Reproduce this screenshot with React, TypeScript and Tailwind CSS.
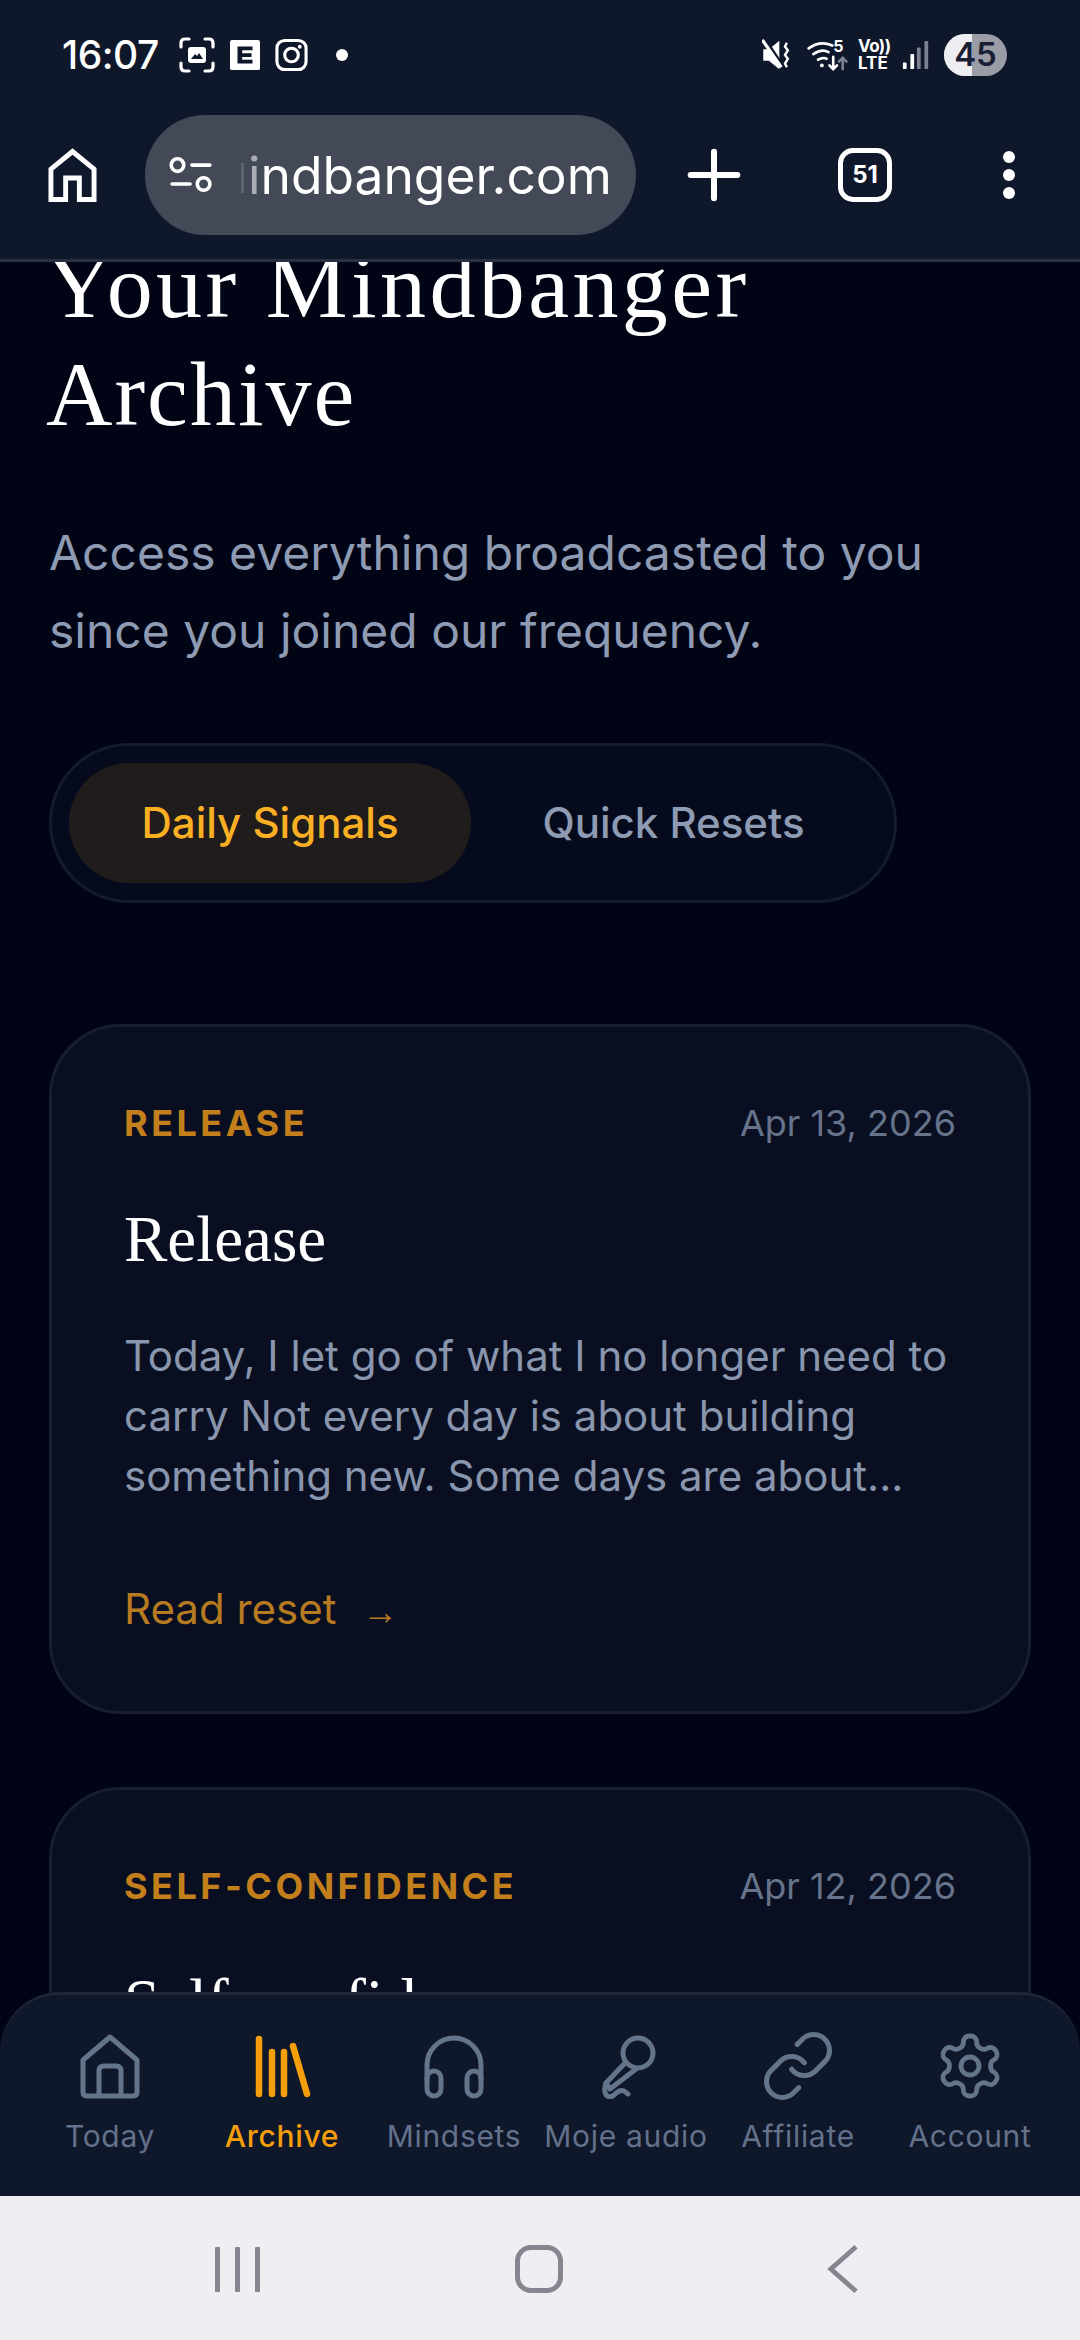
import { Plus } from "lucide-react";

const sans = "font-['Inter',sans-serif]";
const serif = "font-['Liberation_Serif',serif]";

function StatusBar() {
  return (
    <div className="flex h-[110px] items-center justify-between pl-[62px] pr-[73px] text-white">
      <div className="flex items-center">
        <span className={`${sans} w-[98px] text-[39px] font-medium tracking-[-0.5px] whitespace-nowrap`}>16:07</span>
        <svg className="ml-[19px]" width="36" height="36" viewBox="0 0 36 36" fill="none" stroke="white" strokeWidth="3.2" strokeLinecap="round">
          <path d="M2 10V6q0-4 4-4h4M26 2h4q4 0 4 4v4M34 26v4q0 4-4 4h-4M10 34H6q-4 0-4-4v-4" />
          <rect x="9" y="10" width="18" height="16" rx="3" fill="white" stroke="none" />
          <path d="M12 22l4-5 2 2 2-3 4 6z" fill="#0f172a" stroke="none" />
        </svg>
        <svg className="ml-[15px]" width="30" height="30" viewBox="0 0 32 32">
          <rect width="32" height="32" rx="2" fill="white" />
          <path d="M8 7h16v4H13v3h10v4H13v3h11v4H8z" fill="#0f172a" />
        </svg>
        <svg className="ml-[15px]" width="33" height="34" viewBox="0 0 34 34" fill="none" stroke="white" strokeWidth="3.2">
          <rect x="2" y="2" width="30" height="30" rx="8" />
          <circle cx="17" cy="17" r="7" />
          <circle cx="25.5" cy="8.5" r="2" fill="white" stroke="none" />
        </svg>
        <span className="ml-[28px] size-[12px] rounded-full bg-white" />
      </div>
      <div className="flex items-center">
        <svg width="29" height="34" viewBox="0 0 30 36" fill="white">
          <path d="M1 12h6L18 3v30L7 24H1z" />
          <path d="M3 1l21 32" stroke="#0f172a" strokeWidth="3" />
          <path d="M0 2l20 29" stroke="white" strokeWidth="3.4" />
          <path d="M26 5l-2 4 3 4-3 5 3 4-3 5 2 4" fill="none" stroke="white" strokeWidth="2.6" />
        </svg>
        <svg className="ml-[16px]" width="43" height="34" viewBox="0 0 44 36" fill="none" stroke="white" strokeWidth="2.8" strokeLinecap="round">
          <path d="M1 11q12-9 25-3M6 17q9-6 16-2M11 23q5-3 9-1" />
          <circle cx="15" cy="29" r="2" fill="white" stroke="none" />
          <path d="M27 20v13M23 29l4 4 4-4" />
          <path d="M37 33V21M33 25l4-4 4 4" stroke="#7c8190" />
          <text x="27" y="15" fill="white" stroke="none" fontSize="17" fontWeight="700" fontFamily="Inter, sans-serif">5</text>
        </svg>
        <div className={`${sans} ml-[8px] flex w-[30px] flex-col text-[17px] font-bold leading-[17px]`}>
          <span className="tracking-[-0.5px]">Vo))</span>
          <span>LTE</span>
        </div>
        <svg className="ml-[14px]" width="28" height="30" viewBox="0 0 28 32">
          <rect x="0" y="24" width="4" height="7" rx="1" fill="white" />
          <rect x="8" y="15" width="4" height="16" rx="1" fill="white" />
          <rect x="15" y="8" width="4" height="23" rx="1" fill="#7c8190" />
          <rect x="23" y="1" width="4" height="30" rx="1" fill="#7c8190" />
        </svg>
        <div className={`${sans} relative ml-[14px] flex h-[42px] w-[63px] items-center justify-center overflow-hidden rounded-full bg-[#9a9ca6] text-[33px] font-semibold text-[#1a2033]`}>
          <span className="absolute inset-y-0 left-0 w-[28px] bg-[#eceef2]" />
          <span className="relative">45</span>
        </div>
      </div>
    </div>
  );
}

function BrowserBar() {
  return (
    <div className="flex h-[130px] items-center pl-[48px] text-white">
      <svg width="49" height="54" viewBox="0 0 50 54" fill="none" stroke="white" strokeWidth="5">
        <path d="M3 52V21L25 3l22 18v31H32V30H18v22z" />
      </svg>
      <div className={`${sans} ml-[48px] flex h-[120px] w-[491px] items-center rounded-full bg-[#434957] pl-[24px]`}>
        <svg className="shrink-0" width="44" height="36" viewBox="0 0 48 40" fill="none" stroke="white" strokeWidth="4" strokeLinecap="round">
          <circle cx="9" cy="9" r="7" />
          <path d="M25 9h20M3 30h20" />
          <circle cx="38" cy="30" r="7" />
        </svg>
        <span className="mt-[6px] ml-[28px] h-[30px] w-[3px] bg-white/15" />
        <div className="ml-[4px] flex text-[51.5px] leading-[70px] whitespace-nowrap">
          <span className="text-white/55">i</span>
          <span>ndbanger.com</span>
        </div>
      </div>
      <Plus className="ml-[38px]" size={80} strokeWidth={1.8} />
      <div className={`${sans} ml-[84px] flex h-[54px] w-[54px] items-center justify-center rounded-[15px] border-[5px] border-white text-[24px] font-bold`}>
        51
      </div>
      <div className="ml-[111px] flex flex-col gap-[6px]">
        <span className="size-[12px] rounded-full bg-white" />
        <span className="size-[12px] rounded-full bg-white" />
        <span className="size-[12px] rounded-full bg-white" />
      </div>
    </div>
  );
}

function Card({ tag, date, title, body }: { tag: string; date: string; title: string; body?: string }) {
  return (
    <article className="rounded-[72px] border-[3px] border-[#171e30] bg-[#090f20] p-[72px]">
      <div className="flex items-center justify-between">
        <span className={`${sans} text-[36px] leading-[48px] font-bold tracking-[3.5px] text-[#c27f1c]`}>{tag}</span>
        <span className={`${sans} text-[36px] leading-[48px] text-[#66738a]`}>{date}</span>
      </div>
      <h2 className={`${serif} mt-[52px] text-[65px] leading-[80px] text-white`}>{title}</h2>
      {body && (
        <>
          <p className={`${sans} mt-[47px] text-[42px] leading-[60px] text-[#8a96ad]`}>{body}</p>
          <div className={`${sans} mt-[73px] flex items-center text-[42px] leading-[60px] text-[#b67a21]`}>
            Read reset
            <span className="mt-[6px] ml-[26px] font-['Liberation_Sans',sans-serif] text-[36px] leading-none">→</span>
          </div>
        </>
      )}
    </article>
  );
}

const navColor = "#64748b";

const navItems = [
  {
    label: "Today",
    icon: (
      <svg viewBox="0 0 60 66" fill="none" stroke={navColor} strokeWidth="5" strokeLinejoin="round" className="h-[66px] w-[60px]">
        <path d="M3 27L30 4l27 23v32q0 4-4 4H7q-4 0-4-4z" />
        <path d="M19 63V38q0-5 5-5h12q5 0 5 5v25" />
      </svg>
    ),
  },
  {
    label: "Archive",
    active: true,
    icon: (
      <svg viewBox="0 0 60 66" fill="none" stroke="#f59e0b" strokeWidth="6.5" strokeLinecap="round" className="h-[66px] w-[60px]">
        <path d="M7 6v55M20 19v42M32 19v42M41 13l14 48" />
      </svg>
    ),
  },
  {
    label: "Mindsets",
    icon: (
      <svg viewBox="0 0 60 66" fill="none" stroke={navColor} strokeWidth="5" className="h-[66px] w-[60px]">
        <path d="M3 48V32a27 27 0 0 1 54 0v16" />
        <rect x="3" y="38" width="14" height="25" rx="7" />
        <rect x="43" y="38" width="14" height="25" rx="7" />
      </svg>
    ),
  },
  {
    label: "Moje audio",
    icon: (
      <svg viewBox="0 0 60 66" fill="none" stroke={navColor} strokeWidth="5" strokeLinecap="round" strokeLinejoin="round" className="h-[66px] w-[60px]">
        <circle cx="42" cy="20" r="15" />
        <path d="M30 29L10 50l4 6 26-20" />
        <path d="M10 50q-3 9 1 13 5 2 8-2 5-5 9-3l4 3" />
      </svg>
    ),
  },
  {
    label: "Affiliate",
    icon: (
      <svg viewBox="0 0 24 24" fill="none" stroke={navColor} strokeWidth="1.6" strokeLinecap="round" strokeLinejoin="round" className="h-[76px] w-[76px] shrink-0">
        <path d="M10 13a5 5 0 0 0 7.54.54l3-3a5 5 0 0 0-7.07-7.07l-1.72 1.71" />
        <path d="M14 11a5 5 0 0 0-7.54-.54l-3 3a5 5 0 0 0 7.07 7.07l1.71-1.71" />
      </svg>
    ),
  },
  {
    label: "Account",
    icon: (
      <svg viewBox="0 0 24 24" fill="none" stroke={navColor} strokeWidth="1.6" strokeLinecap="round" strokeLinejoin="round" className="h-[72px] w-[72px] shrink-0">
        <path d="M12.22 2h-.44a2 2 0 0 0-2 2v.18a2 2 0 0 1-1 1.73l-.43.25a2 2 0 0 1-2 0l-.15-.08a2 2 0 0 0-2.73.73l-.22.38a2 2 0 0 0 .73 2.73l.15.1a2 2 0 0 1 1 1.72v.51a2 2 0 0 1-1 1.74l-.15.09a2 2 0 0 0-.73 2.73l.22.38a2 2 0 0 0 2.73.73l.15-.08a2 2 0 0 1 2 0l.43.25a2 2 0 0 1 1 1.73V20a2 2 0 0 0 2 2h.44a2 2 0 0 0 2-2v-.18a2 2 0 0 1 1-1.73l.43-.25a2 2 0 0 1 2 0l.15.08a2 2 0 0 0 2.73-.73l.22-.39a2 2 0 0 0-.73-2.73l-.15-.08a2 2 0 0 1-1-1.74v-.5a2 2 0 0 1 1-1.74l.15-.09a2 2 0 0 0 .73-2.73l-.22-.38a2 2 0 0 0-2.73-.73l-.15.08a2 2 0 0 1-2 0l-.43-.25a2 2 0 0 1-1-1.73V4a2 2 0 0 0-2-2z" />
        <circle cx="12" cy="12" r="3" />
      </svg>
    ),
  },
];

function BottomNav() {
  return (
    <nav className="absolute inset-x-0 bottom-0 h-[204px] rounded-t-[60px] border-t-[3px] border-[#1e2638] bg-[#0f172a] px-[24px] pt-[38px]">
      <div className="grid grid-cols-6">
        {navItems.map((item) => (
          <div key={item.label} className="flex flex-col items-center">
            <div className="flex h-[66px] items-center justify-center">{item.icon}</div>
            <span className={`${sans} mt-[17px] text-[30px] leading-[40px] whitespace-nowrap tracking-[0.7px] ${item.active ? "font-medium text-[#f59e0b]" : "text-[#64718a]"}`}>
              {item.label}
            </span>
          </div>
        ))}
      </div>
    </nav>
  );
}

function SystemNav() {
  return (
    <div className="flex h-[144px] shrink-0 items-center bg-[#eeeef3] pt-[2px] pl-[215px]">
      <div className="flex gap-[15px]">
        <span className="h-[45px] w-[5px] rounded-[1px] bg-[#85868f]" />
        <span className="h-[45px] w-[5px] rounded-[1px] bg-[#85868f]" />
        <span className="h-[45px] w-[5px] rounded-[1px] bg-[#85868f]" />
      </div>
      <div className="ml-[255px] h-[48px] w-[48px] rounded-[16px] border-[5px] border-[#85868f]" />
      <svg className="ml-[264px]" width="31" height="50" viewBox="0 0 32 50" fill="none" stroke="#85868f" strokeWidth="5">
        <path d="M30 2L4 25l26 23" />
      </svg>
    </div>
  );
}

export default function App() {
  return (
    <div className={`${sans} flex h-[2340px] w-[1080px] flex-col overflow-hidden bg-[#010414]`}>
      <header className="relative z-10 h-[262px] shrink-0 border-b-[3px] border-[#2a3142] bg-[#0f172a]">
        <StatusBar />
        <BrowserBar />
      </header>
      <div className="relative min-h-0 flex-1 overflow-hidden">
        <main className="-mt-[30px] px-[49px]">
          <h1 className={`${serif} -ml-[3px] text-[92px] leading-[108px] whitespace-nowrap text-white`}>
            <span className="block tracking-[3.4px]">Your Mindbanger</span>
            <span className="block tracking-[2px]">Archive</span>
          </h1>
          <p className="mt-[66px] text-[48px] leading-[78px] text-[#8e9bb3]">
            Access everything broadcasted to you since you joined our frequency.
          </p>
          <div className="mt-[73px] flex h-[160px] w-[848px] items-center rounded-full border-[3px] border-[#141b2c] bg-[#050b1c] pl-[17px]">
            <div className="flex h-[120px] w-[402px] items-center justify-center rounded-full bg-[#201c1c] pb-[2px] text-[42px] font-medium text-[#fbb024]">
              Daily Signals
            </div>
            <div className="flex flex-1 items-center justify-center pr-[18px] pb-[2px] text-[42px] font-medium text-[#8e9bb3]">
              Quick Resets
            </div>
          </div>
          <div className="mt-[121px] flex flex-col gap-[73px]">
            <Card
              tag="RELEASE"
              date="Apr 13, 2026"
              title="Release"
              body="Today, I let go of what I no longer need to carry Not every day is about building something new. Some days are about..."
            />
            <Card tag="SELF-CONFIDENCE" date="Apr 12, 2026" title="Self-confidence" />
          </div>
        </main>
        <BottomNav />
      </div>
      <SystemNav />
    </div>
  );
}
